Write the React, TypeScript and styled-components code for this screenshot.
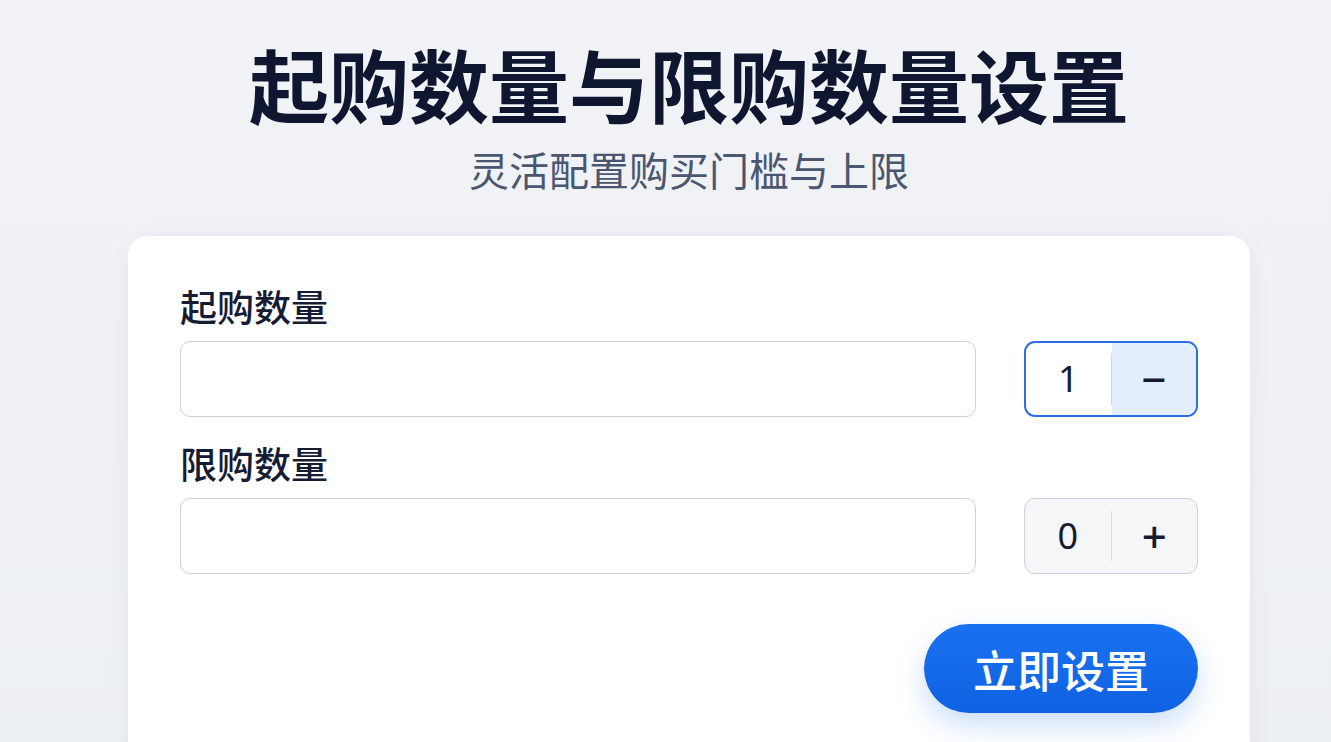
import React from "react";
import styled, { createGlobalStyle, css } from "styled-components";

const GlobalStyle = createGlobalStyle`
	html, body {
		margin: 0;
		padding: 0;
		background: linear-gradient(180deg, #f1f3f6 0%, #eceff3 100%);
		font-family: "Noto Sans CJK SC", "Noto Sans", sans-serif;
		overflow: hidden;
	}
	* {
		box-sizing: border-box;
	}
`;

const Page = styled.div`
	display: flex;
	flex-direction: column;
	align-items: center;
	padding: 34px 0 0 47px;
	min-height: 742px;
`;

const Title = styled.h1`
	margin: 0;
	font-size: 80px;
	line-height: 96px;
	font-weight: 700;
	color: #0f1730;
	letter-spacing: 0;
`;

const Subtitle = styled.p`
	margin: 15px 0 0;
	font-size: 40px;
	line-height: 48px;
	font-weight: 400;
	color: #4b5670;
`;

const Card = styled.div`
	margin-top: 43px;
	width: 1122px;
	background: #ffffff;
	border-radius: 20px;
	padding: 48px 52px 60px;
	display: flex;
	flex-direction: column;
	box-shadow: 0 4px 24px rgba(30, 45, 80, 0.05);
`;

const Label = styled.div<{ $first?: boolean }>`
	margin-top: ${(p) => (p.$first ? "0" : "24px")};
	font-size: 37px;
	line-height: 44px;
	font-weight: 500;
	color: #151c33;
`;

const Row = styled.div`
	margin-top: 13px;
	display: flex;
	gap: 48px;
`;

const TextInput = styled.input`
	width: 797px;
	height: 76px;
	border: 1.5px solid #cbd0da;
	border-radius: 10px;
	background: #ffffff;
	outline: none;
	font-family: inherit;
	font-size: 32px;
	padding: 0 20px;
`;

const Stepper = styled.div<{ $active?: boolean }>`
	width: 174px;
	height: 76px;
	display: flex;
	border-radius: 11px;
	overflow: hidden;
	${(p) =>
		p.$active
			? css`
					border: 2px solid #2a6fe0;
					background: #ffffff;
			  `
			: css`
					border: 1.5px solid #cbd0da;
					background: #f5f6f8;
			  `}
`;

const Segment = styled.div<{ $tint?: boolean; $symbol?: boolean }>`
	flex: 1;
	display: flex;
	align-items: center;
	justify-content: center;
	font-family: "Noto Sans", "Liberation Sans", sans-serif;
	font-size: ${(p) => (p.$symbol ? "44px" : "36px")};
	font-weight: ${(p) => (p.$symbol ? 500 : 400)};
	line-height: 1;
	color: #151c2e;
	background: ${(p) => (p.$tint ? "#e3eefc" : "transparent")};
`;

const Divider = styled.div<{ $active?: boolean }>`
	width: 1px;
	align-self: stretch;
	margin: ${(p) => (p.$active ? "10px 0" : "12px 0")};
	background: ${(p) => (p.$active ? "#c9d7ec" : "#d6dae1")};
`;

const Footer = styled.div`
	margin-top: 50px;
	display: flex;
	justify-content: flex-end;
`;

const SubmitButton = styled.button`
	width: 274px;
	height: 89px;
	border: none;
	border-radius: 45px;
	background: linear-gradient(180deg, #1a72f0 0%, #0f62e2 100%);
	color: #ffffff;
	font-family: inherit;
	font-size: 44px;
	font-weight: 500;
	cursor: pointer;
	box-shadow: 0 12px 28px rgba(20, 104, 232, 0.22);
`;

export default function App() {
	return (
		<>
			<GlobalStyle />
			<Page>
				<Title>起购数量与限购数量设置</Title>
				<Subtitle>灵活配置购买门槛与上限</Subtitle>
				<Card>
					<Label $first>起购数量</Label>
					<Row>
						<TextInput />
						<Stepper $active>
							<Segment>1</Segment>
							<Divider $active />
							<Segment $tint $symbol>−</Segment>
						</Stepper>
					</Row>
					<Label>限购数量</Label>
					<Row>
						<TextInput />
						<Stepper>
							<Segment>0</Segment>
							<Divider />
							<Segment $symbol>+</Segment>
						</Stepper>
					</Row>
					<Footer>
						<SubmitButton>立即设置</SubmitButton>
					</Footer>
				</Card>
			</Page>
		</>
	);
}
